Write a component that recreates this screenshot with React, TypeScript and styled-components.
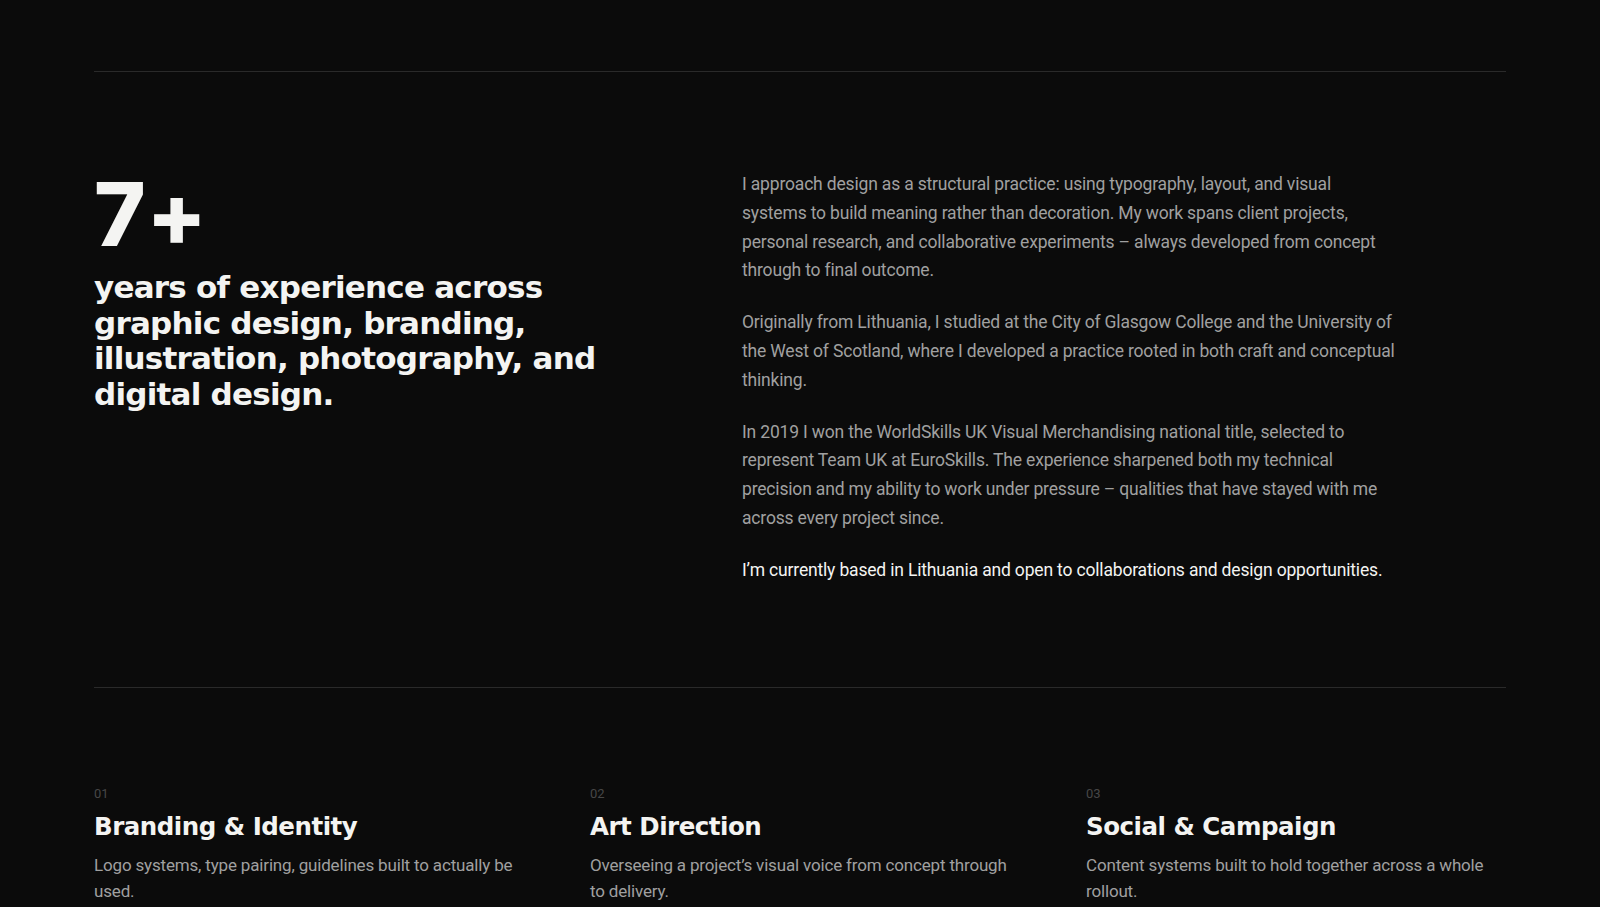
import React from 'react';
import styled, { createGlobalStyle } from 'styled-components';

const GlobalStyle = createGlobalStyle`
  html, body {
    margin: 0;
    padding: 0;
    background: #0b0b0b;
  }
  * {
    box-sizing: border-box;
  }
`;

const paragraphs = [
  'I approach design as a structural practice: using typography, layout, and visual systems to build meaning rather than decoration. My work spans client projects, personal research, and collaborative experiments – always developed from concept through to final outcome.',
  'Originally from Lithuania, I studied at the City of Glasgow College and the University of the West of Scotland, where I developed a practice rooted in both craft and conceptual thinking.',
  'In 2019 I won the WorldSkills UK Visual Merchandising national title, selected to represent Team UK at EuroSkills. The experience sharpened both my technical precision and my ability to work under pressure – qualities that have stayed with me across every project since.',
];

const services = [
  { num: '01', title: 'Branding & Identity', text: 'Logo systems, type pairing, guidelines built to actually be used.' },
  { num: '02', title: 'Art Direction', text: 'Overseeing a project’s visual voice from concept through to delivery.' },
  { num: '03', title: 'Social & Campaign', text: 'Content systems built to hold together across a whole rollout.' },
];

const App = () => {
  return (
    <Page>
      <GlobalStyle />
      <About>
        <Intro>
          <Stat>7+</Stat>
          <Lead>years of experience across graphic design, branding, illustration, photography, and digital design.</Lead>
        </Intro>
        <Copy>
          {paragraphs.map((p) => (
            <Para key={p.slice(0, 12)}>{p}</Para>
          ))}
          <Para $bright>I’m currently based in Lithuania and open to collaborations and design opportunities.</Para>
        </Copy>
      </About>
      <Services>
        {services.map((s) => (
          <Service key={s.num}>
            <Num>{s.num}</Num>
            <ServiceTitle>{s.title}</ServiceTitle>
            <ServiceText>{s.text}</ServiceText>
          </Service>
        ))}
      </Services>
    </Page>
  );
};

export default App;

const Page = styled.div`
  min-height: 100vh;
  padding: 71px 94px 80px;
  background: #0b0b0b;
`;

// about block
const About = styled.section`
  display: grid;
  grid-template-columns: 648px 1fr;
  padding: 98px 0 102px;
  border-top: 1px solid #2a2a2a;
`;
const Intro = styled.div`
  display: flex;
  flex-direction: column;
`;
const Stat = styled.div`
  font-family: Inter, sans-serif;
  font-weight: 800;
  font-size: 88px;
  line-height: 1;
  letter-spacing: 0.01em;
  color: #f4f4f2;
`;
const Lead = styled.h2`
  margin: 12px 0 0;
  max-width: 510px;
  font-family: 'DejaVu Sans', sans-serif;
  font-weight: 700;
  font-size: 31px;
  line-height: 35.7px;
  letter-spacing: -0.025em;
  color: #f4f4f2;
`;
const Copy = styled.div`
  display: flex;
  flex-direction: column;
  gap: 23px;
  max-width: 654px;
`;
const Para = styled.p<{ $bright?: boolean }>`
  margin: 0;
  font-family: Roboto, 'Liberation Sans', sans-serif;
  font-size: 17.5px;
  line-height: 28.8px;
  letter-spacing: -0.01em;
  color: ${(p) => (p.$bright ? '#f4f4f2' : '#a0a0a0')};
`;

// services row
const Services = styled.section`
  display: grid;
  grid-template-columns: repeat(3, 420px);
  column-gap: 76px;
  padding-top: 98px;
  border-top: 1px solid #2a2a2a;
`;
const Service = styled.div`
  display: flex;
  flex-direction: column;
`;
const Num = styled.span`
  font-family: Roboto, sans-serif;
  font-size: 13px;
  line-height: 16px;
  color: #474747;
`;
const ServiceTitle = styled.h3`
  margin: 10px 0 0;
  font-family: 'DejaVu Sans', sans-serif;
  font-weight: 700;
  font-size: 24.5px;
  line-height: 30px;
  letter-spacing: -0.02em;
  color: #f4f4f2;
`;
const ServiceText = styled.p`
  margin: 10px 0 0;
  font-family: Roboto, sans-serif;
  font-size: 17px;
  line-height: 26.5px;
  letter-spacing: -0.01em;
  color: #a0a0a0;
`;
